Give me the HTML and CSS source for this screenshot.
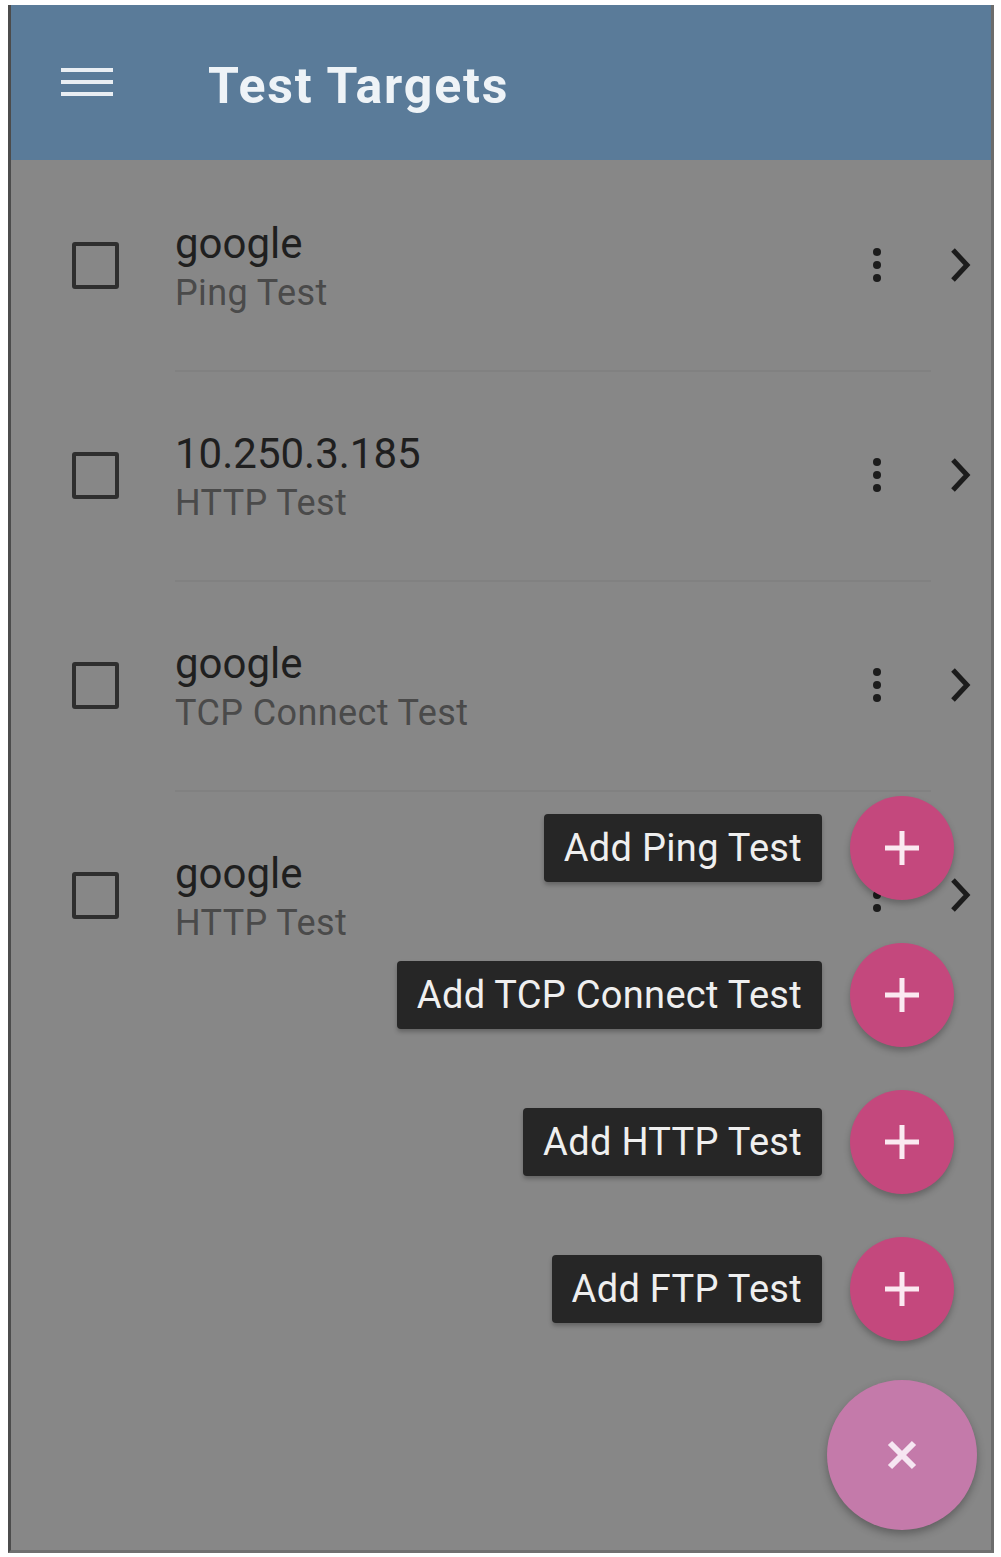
FILE: index.html
```html
<!DOCTYPE html>
<html>
<head>
<meta charset="utf-8">
<link rel="stylesheet" href="styles.css">
</head>
<body>
<div class="phone">
  <header class="appbar">
    <svg class="menu" width="52" height="32" viewBox="0 0 52 32"><rect x="0" y="2" width="52" height="4" fill="#e9eef3"/><rect x="0" y="14" width="52" height="4" fill="#e9eef3"/><rect x="0" y="26" width="52" height="4" fill="#e9eef3"/></svg>
    <h1 class="title">Test Targets</h1>
  </header>
  <ul class="list">
    <li class="row">
      <span class="check"></span>
      <div class="text"><div class="name">google</div><div class="sub">Ping Test</div></div>
      <svg class="dots" width="20" height="44" viewBox="0 0 20 44"><circle cx="10" cy="9" r="4"/><circle cx="10" cy="22" r="4"/><circle cx="10" cy="35" r="4"/></svg>
      <svg class="chev" width="30" height="44" viewBox="0 0 30 44"><path d="M9 7 L23 22 L9 37" fill="none" stroke="#1c1c1c" stroke-width="5"/></svg>
    </li>
    <li class="row">
      <span class="check"></span>
      <div class="text"><div class="name">10.250.3.185</div><div class="sub">HTTP Test</div></div>
      <svg class="dots" width="20" height="44" viewBox="0 0 20 44"><circle cx="10" cy="9" r="4"/><circle cx="10" cy="22" r="4"/><circle cx="10" cy="35" r="4"/></svg>
      <svg class="chev" width="30" height="44" viewBox="0 0 30 44"><path d="M9 7 L23 22 L9 37" fill="none" stroke="#1c1c1c" stroke-width="5"/></svg>
    </li>
    <li class="row">
      <span class="check"></span>
      <div class="text"><div class="name">google</div><div class="sub">TCP Connect Test</div></div>
      <svg class="dots" width="20" height="44" viewBox="0 0 20 44"><circle cx="10" cy="9" r="4"/><circle cx="10" cy="22" r="4"/><circle cx="10" cy="35" r="4"/></svg>
      <svg class="chev" width="30" height="44" viewBox="0 0 30 44"><path d="M9 7 L23 22 L9 37" fill="none" stroke="#1c1c1c" stroke-width="5"/></svg>
    </li>
    <li class="row">
      <span class="check"></span>
      <div class="text"><div class="name">google</div><div class="sub">HTTP Test</div></div>
      <svg class="dots" width="20" height="44" viewBox="0 0 20 44"><circle cx="10" cy="9" r="4"/><circle cx="10" cy="22" r="4"/><circle cx="10" cy="35" r="4"/></svg>
      <svg class="chev" width="30" height="44" viewBox="0 0 30 44"><path d="M9 7 L23 22 L9 37" fill="none" stroke="#1c1c1c" stroke-width="5"/></svg>
    </li>
  </ul>
  <div class="fabmenu">
    <div class="item"><span class="label">Add Ping Test</span><span class="mini"><svg width="40" height="40" viewBox="0 0 40 40"><path d="M20 3 V37 M3 20 H37" stroke="#fbe9f1" stroke-width="5"/></svg></span></div>
    <div class="item"><span class="label">Add TCP Connect Test</span><span class="mini"><svg width="40" height="40" viewBox="0 0 40 40"><path d="M20 3 V37 M3 20 H37" stroke="#fbe9f1" stroke-width="5"/></svg></span></div>
    <div class="item"><span class="label">Add HTTP Test</span><span class="mini"><svg width="40" height="40" viewBox="0 0 40 40"><path d="M20 3 V37 M3 20 H37" stroke="#fbe9f1" stroke-width="5"/></svg></span></div>
    <div class="item"><span class="label">Add FTP Test</span><span class="mini"><svg width="40" height="40" viewBox="0 0 40 40"><path d="M20 3 V37 M3 20 H37" stroke="#fbe9f1" stroke-width="5"/></svg></span></div>
    <div class="main"><svg width="34" height="34" viewBox="0 0 34 34"><path d="M5 5 L29 29 M29 5 L5 29" stroke="#f6e6f2" stroke-width="6"/></svg></div>
  </div>
</div>
</body>
</html>
```
FILE: styles.css
```css
* { box-sizing: border-box; }
html, body { margin: 0; padding: 0; background: #ffffff; }
body { font-family: Roboto, "Liberation Sans", Arial, sans-serif; }

.phone {
  position: relative;
  margin: 5px 0 0 8px;
  width: 986px;
  height: 1548px;
  background: #878787;
  border-left: 3px solid #4c4c4c;
  border-right: 3px solid #6c6c6c;
  border-bottom: 3px solid #707070;
  overflow: hidden;
}

.appbar {
  height: 155px;
  background: #5a7b99;
  display: flex;
  align-items: center;
  padding-left: 50px;
}
.menu { display: block; margin-top: -2px; }
.title {
  margin: 6px 0 0 95px;
  font-size: 50px;
  font-weight: 700;
  color: #eef3f7;
  letter-spacing: 1.8px;
}

.list { list-style: none; margin: 0; padding: 0; }
.row {
  height: 210px;
  display: flex;
  align-items: center;
  padding-left: 61px;
  position: relative;
}
.row + .row::before {
  content: "";
  position: absolute;
  top: 0;
  left: 164px;
  right: 60px;
  height: 2px;
  background: #818181;
}
.check {
  width: 47px;
  height: 47px;
  border: 4px solid #2e2e2e;
  border-radius: 3px;
  flex: none;
}
.text { margin-left: 56px; flex: 1; margin-top: 6px; }
.name { font-size: 42px; line-height: 50px; color: #1f1f1f; }
.sub { font-size: 36px; line-height: 48px; color: #4a4a4a; letter-spacing: 0.4px; }
.dots { fill: #1c1c1c; margin-right: 57px; }
.chev { margin-right: 17px; }

.fabmenu {
  position: absolute;
  right: 14px;
  top: 790px;
  display: flex;
  flex-direction: column;
  align-items: flex-end;
  gap: 42px;
}
.item { display: flex; align-items: center; gap: 28px; height: 105px; }
.label {
  background: #262626;
  color: #efefef;
  font-size: 38px;
  height: 68px;
  line-height: 68px;
  padding: 0 20px;
  border-radius: 4px;
  box-shadow: 0 3px 4px rgba(0,0,0,0.25);
  letter-spacing: 0.3px;
}
.mini {
  width: 104px;
  height: 104px;
  border-radius: 50%;
  background: #c4487d;
  display: flex;
  align-items: center;
  justify-content: center;
  margin-right: 23px;
  box-shadow: 0 4px 6px rgba(0,0,0,0.25);
}
.main {
  width: 150px;
  height: 150px;
  border-radius: 50%;
  background: #c47aaa;
  display: flex;
  align-items: center;
  justify-content: center;
  margin-top: -3px;
  box-shadow: 0 4px 8px rgba(0,0,0,0.3);
}
```
